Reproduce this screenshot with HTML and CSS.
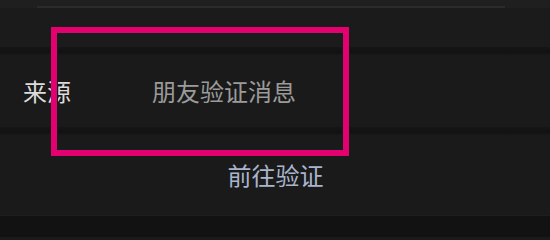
FILE: index.html
```html
<!DOCTYPE html>
<html lang="zh">
<head>
<meta charset="utf-8">
<link rel="stylesheet" href="styles.css">
</head>
<body>
<div class="screen">
  <div class="topbar"><div class="topline"></div></div>
  <div class="row-blank"></div>
  <div class="divider"></div>
  <div class="row-source">
    <span class="label">来源</span>
    <span class="value">朋友验证消息</span>
  </div>
  <div class="divider"></div>
  <div class="row-action">
    <span class="action">前往验证</span>
  </div>
  <div class="bottom"></div>
  <div class="highlight"></div>
</div>
</body>
</html>
```
FILE: styles.css
```css
html, body {
  margin: 0;
  padding: 0;
  background: #1a1a1a;
}
.screen {
  position: relative;
  width: 550px;
  height: 237px;
  overflow: hidden;
  background: #1a1a1a;
  font-family: "Noto Sans CJK SC", "Noto Sans", sans-serif;
  display: flex;
  flex-direction: column;
}
.topbar {
  height: 8px;
  background: #1f1f1f;
  display: flex;
  align-items: flex-end;
  padding: 0 45px 0 37px;
}
.topline {
  flex: 1;
  height: 2px;
  background: #2b2b2b;
}
.row-blank {
  height: 39px;
  background: #1b1b1b;
}
.divider {
  height: 8px;
  background: linear-gradient(#161616, #121212 60%, #171717);
}
.row-source {
  height: 72px;
  background: #1a1a1a;
  display: grid;
  grid-template-columns: 129px 1fr;
  align-items: center;
  padding-left: 23px;
}
.label, .value, .action {
  font-size: 24px;
  line-height: 24px;
  letter-spacing: 0;
}
.label {
  color: #dcdcdc;
}
.value {
  color: #9b9b9b;
}
.row-action {
  height: 80px;
  background: #1a1a1a;
  display: flex;
  justify-content: center;
  align-items: flex-start;
  padding-top: 28px;
  box-sizing: border-box;
}
.action {
  color: #a9b5cd;
  padding-left: 1px;
}
.bottom {
  flex: 1;
  background: #121212;
  border-top: 1px solid #1e1e1e;
}
.highlight {
  position: absolute;
  left: 51px;
  top: 27px;
  width: 286px;
  height: 117px;
  border: 6px solid #e4006f;
  box-shadow: inset 0 0 0 1px #0c2322;
}
```
